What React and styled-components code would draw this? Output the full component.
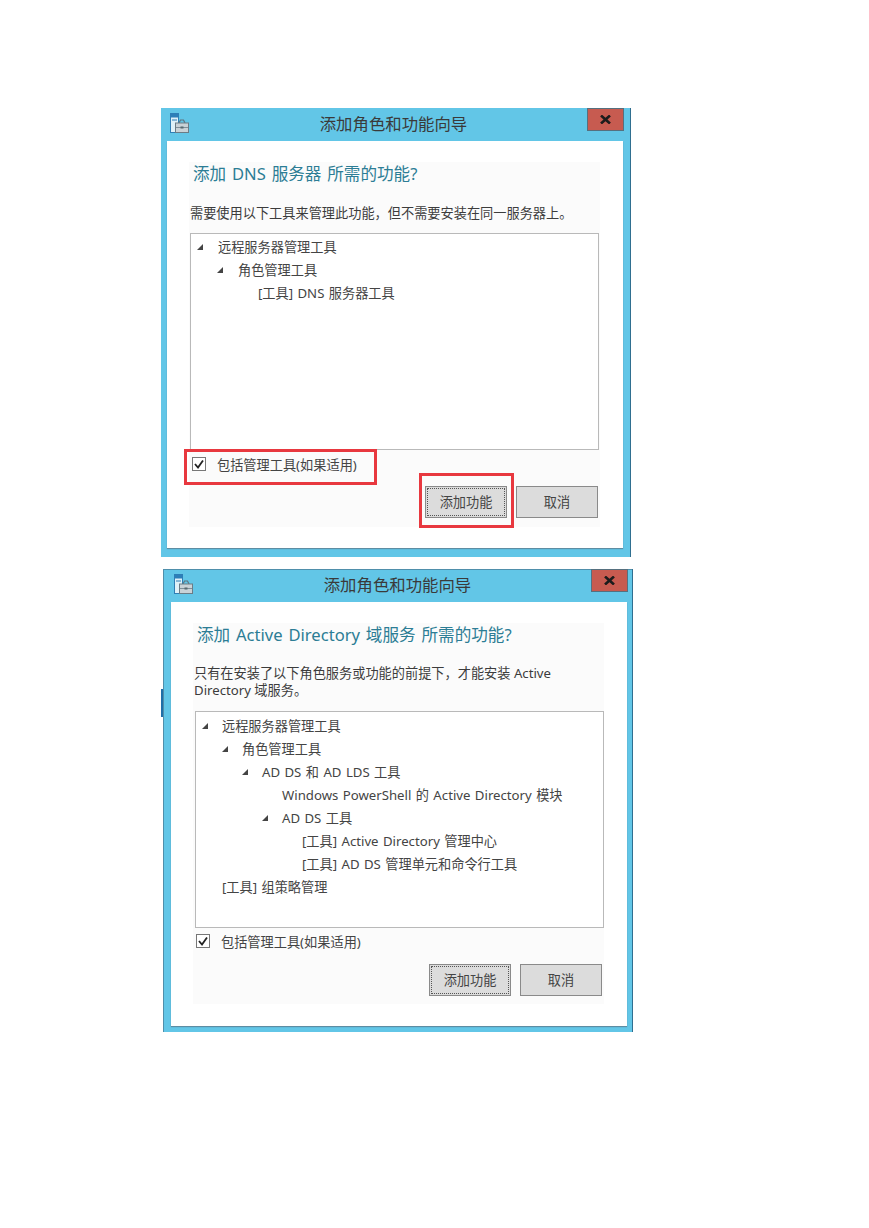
import React from "react";
import styled, { createGlobalStyle } from "styled-components";

const GlobalStyle = createGlobalStyle`
    html, body {
        margin: 0;
        padding: 0;
        background: #fff;
    }
    body {
        font-family: "Noto Sans", "Noto Sans CJK SC", sans-serif;
    }
`;

const Page = styled.div`
    width: 869px;
    height: 1228px;
    padding-top: 108px;
    box-sizing: border-box;
    overflow: hidden;
`;

const Window = styled.div`
    position: relative;
    width: 470px;
    box-sizing: border-box;
    margin-left: ${(p) => p.$left}px;
    margin-top: ${(p) => p.$top}px;
    padding: 0 ${(p) => p.$padRight}px ${(p) => p.$padBottom}px ${(p) => p.$padLeft}px;
    background: #62c6e7;
    border-right: 1px solid #2f6f90;
    box-shadow: ${(p) => (p.$edge ? "inset 1px 0 #4f8fab, inset 0 1px #4f8fab" : "none")};
`;

const TitleBar = styled.div`
    position: relative;
    height: 33px;
    box-sizing: border-box;
    padding: 0 3px 4px 0;
    display: flex;
    align-items: center;
    justify-content: center;
    font-size: 16.4px;
    color: #3a3a3a;
`;

const AppIcon = styled.svg`
    position: absolute;
    left: 3px;
    top: 5px;
`;

const CloseButton = styled.div`
    position: absolute;
    right: -1px;
    top: 0;
    width: 37px;
    height: 23px;
    display: flex;
    align-items: center;
    justify-content: center;
    background: #c75b50;
    border: 1px solid #56707f;
    box-sizing: border-box;
`;

const Client = styled.div`
    background: #fff;
    height: ${(p) => p.$height}px;
    padding: 21px 23px 0 22px;
    box-sizing: border-box;
    box-shadow: 0 1px 1px #5d8da3;
`;

const Panel = styled.div`
    background: #fbfbfb;
    height: ${(p) => p.$height}px;
    display: flex;
    flex-direction: column;
`;

const Heading = styled.div`
    font-size: 16.6px;
    line-height: 22px;
    word-spacing: 1.5px;
    color: #2c7d95;
    margin-top: 1px;
    padding-left: 4px;
`;

const Description = styled.div`
    margin-top: ${(p) => p.$gap}px;
    margin-left: 1px;
    font-size: 13.2px;
    line-height: 17px;
    color: #3c3c3c;
    width: 395px;
`;

const TreeBox = styled.div`
    margin-top: ${(p) => p.$gap}px;
    margin-left: ${(p) => p.$indent}px;
    height: ${(p) => p.$height}px;
    width: 409px;
    box-sizing: border-box;
    background: #fff;
    border: 1px solid #b9b9b9;
    padding-top: ${(p) => p.$rowTop}px;
`;

const TreeRow = styled.div`
    height: 23px;
    display: flex;
    align-items: center;
    padding-left: ${(p) => p.$depth * 20 + 5}px;
    font-size: 13.2px;
    word-spacing: 1px;
    color: #444;
    white-space: nowrap;
`;

const Arrow = styled.span`
    width: ${(p) => p.$width}px;
    flex: none;
    display: flex;
    align-items: center;
`;

const CheckRow = styled.div`
    display: flex;
    align-items: center;
    height: 14px;
    margin-top: ${(p) => p.$gap}px;
    padding-left: 3px;
    font-size: 13.2px;
    color: #444;
`;

const CheckBox = styled.span`
    width: 14px;
    height: 14px;
    box-sizing: border-box;
    border: 1px solid #777;
    background: #fff;
    margin-right: 11px;
    display: flex;
    align-items: center;
    justify-content: center;
`;

const Buttons = styled.div`
    display: flex;
    justify-content: flex-end;
    gap: 9px;
    margin-top: ${(p) => p.$gap}px;
    padding-right: 2px;
`;

const Button = styled.div`
    width: 82px;
    height: 32px;
    box-sizing: border-box;
    padding-bottom: 1px;
    display: flex;
    align-items: center;
    justify-content: center;
    font-size: 13.2px;
    color: #444;
    background: #dcdcdc;
    border: 1px solid #8a8a8a;
    outline: ${(p) => (p.$focused ? "1px dotted #555" : "none")};
    outline-offset: -3px;
`;

const Highlight = styled.div`
    position: absolute;
    left: ${(p) => p.$left}px;
    top: ${(p) => p.$top}px;
    width: ${(p) => p.$width}px;
    height: ${(p) => p.$height}px;
    box-sizing: border-box;
    border: 3px solid #e8383f;
`;

// the blue sliver sticking out on the left of the second screenshot
const EdgeMark = styled.div`
    position: absolute;
    left: -2px;
    top: 120px;
    width: 2px;
    height: 28px;
    background: #1f6fa8;
`;

const WizardIcon = () => (
    <AppIcon width="19" height="21" viewBox="0 0 19 21">
        <rect x="0.5" y="0.5" width="8" height="19" fill="#dff1f8" stroke="#2f7fb5" />
        <rect x="0.5" y="0.5" width="8" height="4" fill="#2d7fb8" />
        <path d="M2 7 H7" stroke="#2f7fb5" />
        <path d="M9 10 l1.5-3 h3 l1.5 3" fill="none" stroke="#5f7480" strokeWidth="1.2" />
        <rect x="5.5" y="10" width="13" height="9.5" fill="#c9d2d7" stroke="#6b7c86" />
        <path d="M6 14.5 H18" stroke="#7f8f98" />
        <rect x="10.5" y="13.5" width="3" height="2" fill="#56686f" />
    </AppIcon>
);

const CloseGlyph = () => (
    <svg width="11" height="9" viewBox="0 0 11 9">
        <path d="M1 0.5 L10 8.5 M10 0.5 L1 8.5" stroke="#1c1c1c" strokeWidth="2.6" />
    </svg>
);

const TreeArrow = () => (
    <svg width="8" height="8" viewBox="0 0 8 8">
        <path d="M7 1 V7 H1 Z" fill="#444" />
    </svg>
);

const CheckMark = () => (
    <svg width="10" height="10" viewBox="0 0 10 10">
        <path d="M1 5 L4 8.5 L9 1.5" fill="none" stroke="#222" strokeWidth="1.8" />
    </svg>
);

const Dialog = ({ layout, heading, description, rows, children }) => (
    <Window
        $left={layout.left}
        $top={layout.top}
        $padLeft={layout.padLeft}
        $padRight={layout.padRight}
        $padBottom={layout.padBottom}
        $edge={layout.edge}
    >
        <TitleBar>
            <WizardIcon />
            添加角色和功能向导
            <CloseButton>
                <CloseGlyph />
            </CloseButton>
        </TitleBar>
        <Client $height={layout.clientHeight}>
            <Panel $height={layout.panelHeight}>
                <Heading>{heading}</Heading>
                <Description $gap={layout.descGap}>{description}</Description>
                <TreeBox
                    $gap={layout.treeGap}
                    $indent={layout.treeIndent}
                    $height={layout.treeHeight}
                    $rowTop={layout.rowTop}
                >
                    {rows.map((row) => (
                        <TreeRow key={row.text} $depth={row.depth}>
                            <Arrow $width={layout.arrowWidth}>{row.open && <TreeArrow />}</Arrow>
                            {row.text}
                        </TreeRow>
                    ))}
                </TreeBox>
                <CheckRow $gap={layout.checkGap}>
                    <CheckBox>
                        <CheckMark />
                    </CheckBox>
                    包括管理工具(如果适用)
                </CheckRow>
                <Buttons $gap={layout.buttonGap}>
                    <Button $focused>添加功能</Button>
                    <Button>取消</Button>
                </Buttons>
            </Panel>
        </Client>
        {children}
    </Window>
);

const dnsRows = [
    { text: "远程服务器管理工具", depth: 0, open: true },
    { text: "角色管理工具", depth: 1, open: true },
    { text: "[工具] DNS 服务器工具", depth: 2 },
];

const adRows = [
    { text: "远程服务器管理工具", depth: 0, open: true },
    { text: "角色管理工具", depth: 1, open: true },
    { text: "AD DS 和 AD LDS 工具", depth: 2, open: true },
    { text: "Windows PowerShell 的 Active Directory 模块", depth: 3 },
    { text: "AD DS 工具", depth: 3, open: true },
    { text: "[工具] Active Directory 管理中心", depth: 4 },
    { text: "[工具] AD DS 管理单元和命令行工具", depth: 4 },
    { text: "[工具] 组策略管理", depth: 0 },
];

const App = () => (
    <Page>
        <GlobalStyle />
        <Dialog
            layout={{
                left: 161,
                top: 0,
                padLeft: 6,
                padRight: 7,
                padBottom: 9,
                clientHeight: 407,
                panelHeight: 365,
                descGap: 20,
                treeGap: 11,
                treeIndent: 1,
                treeHeight: 217,
                rowTop: 1,
                arrowWidth: 22,
                checkGap: 7,
                buttonGap: 15,
            }}
            heading="添加 DNS 服务器 所需的功能?"
            description="需要使用以下工具来管理此功能，但不需要安装在同一服务器上。"
            rows={dnsRows}
        >
            <Highlight $left={23} $top={341} $width={193} $height={36} />
            <Highlight $left={258} $top={365} $width={95} $height={55} />
        </Dialog>
        <Dialog
            layout={{
                left: 163,
                top: 12,
                padLeft: 8,
                padRight: 5,
                padBottom: 6,
                edge: true,
                clientHeight: 424,
                panelHeight: 381,
                descGap: 19,
                treeGap: 12,
                treeIndent: 2,
                treeHeight: 217,
                rowTop: 2,
                arrowWidth: 21,
                checkGap: 6,
                buttonGap: 16,
            }}
            heading="添加 Active Directory 域服务 所需的功能?"
            description="只有在安装了以下角色服务或功能的前提下，才能安装 Active Directory 域服务。"
            rows={adRows}
        >
            <EdgeMark />
        </Dialog>
    </Page>
);

export default App;
